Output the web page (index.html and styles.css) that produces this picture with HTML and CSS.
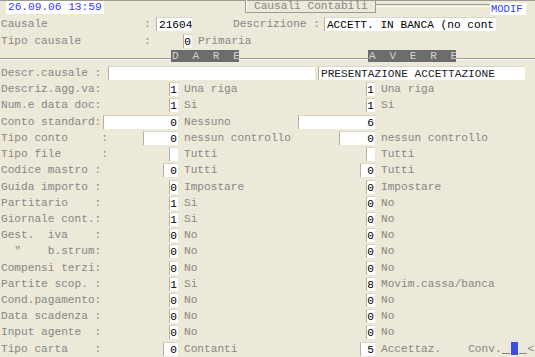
FILE: index.html
```html
<!DOCTYPE html>
<html>
<head>
<meta charset="utf-8">
<link rel="stylesheet" href="styles.css">
</head>
<body>
<div class="screen">
  <div class="row top">
    <span class="clock">26.09.06 13:59</span>
    <span class="title">Causali Contabili</span>
    <span class="rule"></span>
    <span class="mode">MODIF</span>
  </div>
  <div class="row head">
    <span class="hlabel">Causale</span><span class="colon">:</span><span class="box code">21604</span>
    <span class="dlabel">Descrizione :</span><span class="box desc">ACCETT. IN BANCA (no cont</span>
  </div>
  <div class="row head">
    <span class="hlabel">Tipo causale</span><span class="colon">:</span><span class="box tipo">0</span><span class="txt prim">Primaria</span>
  </div>
  <div class="row sides">
    <span class="side dare">D  A  R  E</span><span class="side avere">A  V  E  R  E</span>
  </div>
  <div class="row descr">
    <span class="lbl">Descr.causale :</span><span class="box long"></span><span class="box long2">PRESENTAZIONE ACCETTAZIONE</span>
  </div>

  <div class="row field">
    <span class="lbl">Descriz.agg.va:</span>
    <span class="cell"><span class="box w1">1</span></span><span class="txt">Una riga</span>
    <span class="cell"><span class="box w1">1</span></span><span class="txt">Una riga</span>
  </div>
  <div class="row field">
    <span class="lbl">Num.e data doc:</span>
    <span class="cell"><span class="box w1">1</span></span><span class="txt">Si</span>
    <span class="cell"><span class="box w1">1</span></span><span class="txt">Si</span>
  </div>
  <div class="row field">
    <span class="lbl">Conto standard:</span>
    <span class="cell"><span class="box w11">0</span></span><span class="txt">Nessuno</span>
    <span class="cell"><span class="box w11r">6</span></span><span class="txt"></span>
  </div>
  <div class="row field">
    <span class="lbl">Tipo conto     :</span>
    <span class="cell"><span class="box w5">0</span></span><span class="txt">nessun controllo</span>
    <span class="cell"><span class="box w5r">0</span></span><span class="txt">nessun controllo</span>
  </div>
  <div class="row field">
    <span class="lbl">Tipo file      :</span>
    <span class="cell"><span class="box w1"></span></span><span class="txt">Tutti</span>
    <span class="cell"><span class="box w1"></span></span><span class="txt">Tutti</span>
  </div>
  <div class="row field">
    <span class="lbl">Codice mastro :</span>
    <span class="cell"><span class="box w2">0</span></span><span class="txt">Tutti</span>
    <span class="cell"><span class="box w2">0</span></span><span class="txt">Tutti</span>
  </div>
  <div class="row field">
    <span class="lbl">Guida importo :</span>
    <span class="cell"><span class="box w1">0</span></span><span class="txt">Impostare</span>
    <span class="cell"><span class="box w1">0</span></span><span class="txt">Impostare</span>
  </div>
  <div class="row field">
    <span class="lbl">Partitario    :</span>
    <span class="cell"><span class="box w1">1</span></span><span class="txt">Si</span>
    <span class="cell"><span class="box w1">0</span></span><span class="txt">No</span>
  </div>
  <div class="row field">
    <span class="lbl">Giornale cont.:</span>
    <span class="cell"><span class="box w1">1</span></span><span class="txt">Si</span>
    <span class="cell"><span class="box w1">0</span></span><span class="txt">No</span>
  </div>
  <div class="row field">
    <span class="lbl">Gest.  iva    :</span>
    <span class="cell"><span class="box w1">0</span></span><span class="txt">No</span>
    <span class="cell"><span class="box w1">0</span></span><span class="txt">No</span>
  </div>
  <div class="row field">
    <span class="lbl">  "    b.strum:</span>
    <span class="cell"><span class="box w1">0</span></span><span class="txt">No</span>
    <span class="cell"><span class="box w1">0</span></span><span class="txt">No</span>
  </div>
  <div class="row field">
    <span class="lbl">Compensi terzi:</span>
    <span class="cell"><span class="box w1">0</span></span><span class="txt">No</span>
    <span class="cell"><span class="box w1">0</span></span><span class="txt">No</span>
  </div>
  <div class="row field">
    <span class="lbl">Partite scop. :</span>
    <span class="cell"><span class="box w1">1</span></span><span class="txt">Si</span>
    <span class="cell"><span class="box w1">8</span></span><span class="txt">Movim.cassa/banca</span>
  </div>
  <div class="row field">
    <span class="lbl">Cond.pagamento:</span>
    <span class="cell"><span class="box w1">0</span></span><span class="txt">No</span>
    <span class="cell"><span class="box w1">0</span></span><span class="txt">No</span>
  </div>
  <div class="row field">
    <span class="lbl">Data scadenza :</span>
    <span class="cell"><span class="box w1">0</span></span><span class="txt">No</span>
    <span class="cell"><span class="box w1">0</span></span><span class="txt">No</span>
  </div>
  <div class="row field">
    <span class="lbl">Input agente  :</span>
    <span class="cell"><span class="box w1">0</span></span><span class="txt">No</span>
    <span class="cell"><span class="box w1">0</span></span><span class="txt">No</span>
  </div>
  <div class="row field">
    <span class="lbl">Tipo carta    :</span>
    <span class="cell"><span class="box w2">0</span></span><span class="txt">Contanti</span>
    <span class="cell"><span class="box w2">5</span></span>
    <span class="txt last"><span>Accettaz.</span><span class="conv">Conv.</span><span class="uline"></span><span class="cursor"></span><span class="uline"></span><span class="lt">&lt;</span></span>
  </div>
</div>
</body>
</html>
```

FILE: styles.css
```css
html, body {
  margin: 0;
  padding: 0;
  background: #ece9d8;
}

.screen {
  width: 535px;
  height: 357px;
  overflow: hidden;
  background: #ece9d8;
  font-family: "Liberation Mono", "DejaVu Sans Mono", monospace;
  font-size: 11.15px;
  color: #868686;
}

.row {
  height: 16.23px;
  padding-left: 1px;
  box-sizing: border-box;
  display: flex;
  align-items: center;
  white-space: pre;
  line-height: 14px;
}

/* top bar */
.top {
  align-items: flex-start;
  padding-left: 0;
  border-top: 1px solid #9c9a90;
}
.clock {
  margin-left: 6px;
  width: 96px;
  height: 13px;
  line-height: 13px;
  padding-left: 2px;
  background: #fff;
  color: #2f3cff;
}
.title {
  margin-left: 141px;
  width: 121px;
  height: 12px;
  margin-top: -1px;
  line-height: 13px;
  padding-left: 8px;
  border: 1px solid #9c9a90;
  border-top: none;
  box-shadow: inset 1px 0 0 #fff;
  color: #868686;
}
.rule {
  flex: 0 0 114px;
  margin-top: 3px;
  height: 1px;
  border-top: 1px solid #9c9a90;
  border-bottom: 1px solid #fff;
}
.mode {
  margin-top: 2px;
  width: 35px;
  height: 12px;
  line-height: 12px;
  padding-left: 1px;
  background: #fff;
  color: #2f3cff;
  font-size: 10.5px;
}

/* header rows */
.hlabel { width: 143px; }
.colon { width: 7px; }

.box {
  display: inline-block;
  box-sizing: border-box;
  height: 14px;
  line-height: 14px;
  background: #fff;
  color: #000;
  text-align: right;
  padding-right: 1px;
  border-left: 1px solid #b4b2a8;
  border-top: 1px solid #d8d6cc;
}
.code {
  margin-left: 5px;
  width: 36px;
  text-align: left;
  padding-left: 2px;
}
.dlabel { margin-left: 41px; }
.desc {
  margin-left: 4px;
  width: 172px;
  text-align: left;
  padding-left: 2px;
}
.tipo {
  margin-left: 32px;
  width: 9px;
}
.prim { padding-left: 7px; }

/* dare / avere */
.sides {
  align-items: flex-start;
  padding-left: 0;
  background: linear-gradient(to bottom,
    transparent 9px, #9c9a90 9px, #9c9a90 10px,
    #ffffff 10px, #ffffff 11px, transparent 11px);
}
.side {
  box-sizing: border-box;
  margin-top: 1px;
  height: 12px;
  line-height: 12px;
  font-size: 11px;
  letter-spacing: 0.2px;
  background: #6c6c6c;
  color: #d4d4d4;
  padding-left: 1px;
}
.dare { margin-left: 171px; width: 68px; }
.avere { margin-left: 129px; width: 88px; }

/* descr row */
.lbl { width: 100px; flex: 0 0 100px; }
.long {
  margin-left: 7px;
  width: 207px;
}
.long2 {
  margin-left: 3px;
  width: 207px;
  text-align: left;
  padding-left: 2px;
  color: #222;
}

/* field rows */
.field {
  display: grid;
  grid-template-columns: 100px 77px 118px 79px 1fr;
  align-items: center;
}
.cell {
  display: flex;
  justify-content: flex-end;
}
.txt { padding-left: 6px; }

.w1 { width: 9px; }
.w2 { width: 15px; }
.w5 { width: 35px; }
.w5r { width: 36px; }
.w11 { width: 75px; }
.w11r { width: 77px; }

.last {
  display: flex;
  align-items: center;
}
.conv { margin-left: 27px; }
.uline {
  width: 8px;
  height: 1px;
  margin-top: 9px;
  background: #868686;
}
.cursor {
  width: 7px;
  height: 13px;
  margin-left: 1px;
  margin-right: 1px;
  background: #3a4fe0;
}
.lt { margin-left: 1px; }
```
